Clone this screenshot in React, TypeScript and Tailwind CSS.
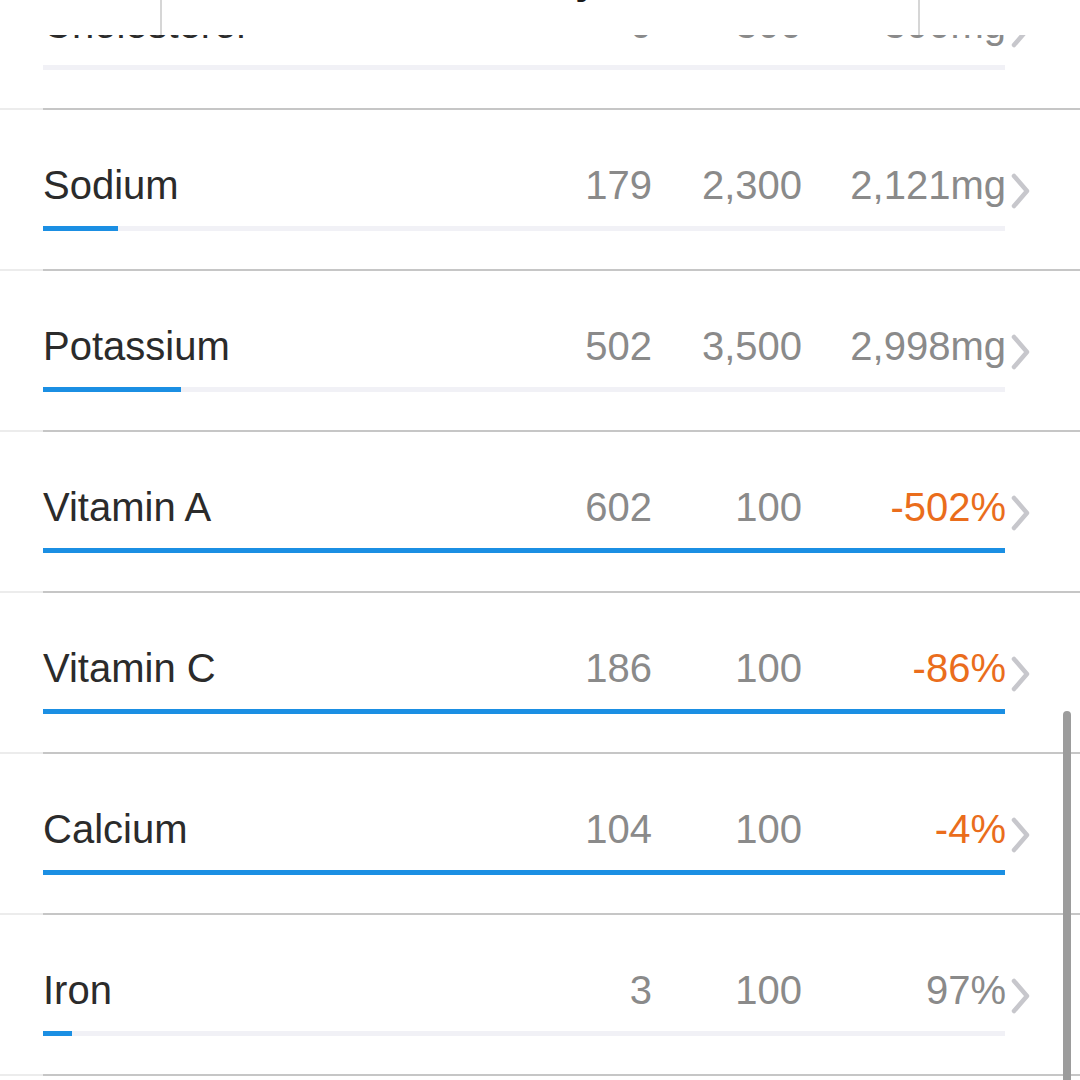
import React from 'react';

type Nutrient = {
    name: string;
    eaten: string;
    goal: string;
    left: string;
    over?: boolean;
    pct: number;
};

const nutrients: Nutrient[] = [
    { name: 'Cholesterol', eaten: '0', goal: '300', left: '300mg', pct: 0 },
    { name: 'Sodium', eaten: '179', goal: '2,300', left: '2,121mg', pct: 179 / 2300 },
    { name: 'Potassium', eaten: '502', goal: '3,500', left: '2,998mg', pct: 502 / 3500 },
    { name: 'Vitamin A', eaten: '602', goal: '100', left: '-502%', over: true, pct: 1 },
    { name: 'Vitamin C', eaten: '186', goal: '100', left: '-86%', over: true, pct: 1 },
    { name: 'Calcium', eaten: '104', goal: '100', left: '-4%', over: true, pct: 1 },
    { name: 'Iron', eaten: '3', goal: '100', left: '97%', pct: 0.03 },
];

const Chevron = () => (
    <svg width="26" height="36" viewBox="0 0 26 36" className="self-center translate-y-[6px] shrink-0">
        <path d="M8 3 L21 18 L8 33" fill="none" stroke="#c7c7cc" strokeWidth="4.5" strokeLinecap="round" strokeLinejoin="round" />
    </svg>
);

const NutrientRow = ({ item }: { item: Nutrient }) => (
    <div className="h-[161px] flex flex-col">
        <div className="flex items-baseline pl-[43px] pr-[48px] pt-[52px] text-[40px] leading-[46px]">
            <span className="flex-1 text-[#2b2b2b]">{item.name}</span>
            <span className="w-[150px] text-right text-[#8a8a8a]">{item.eaten}</span>
            <span className="w-[150px] text-right text-[#8a8a8a]">{item.goal}</span>
            <span className={`w-[204px] text-right ${item.over ? 'text-[#ea6d1c]' : 'text-[#8a8a8a]'}`}>{item.left}</span>
            <Chevron />
        </div>
        <div className="mt-[18px] ml-[43px] w-[962px] h-[5px] bg-[#f1f1f6]">
            <div className="h-full bg-[#1b8fe3]" style={{ width: `${Math.min(item.pct, 1) * 100}%` }} />
        </div>
        <div className="mt-auto h-[2px] bg-[#ececec]">
            <div className="ml-[43px] h-full bg-[#c6c6c6]" />
        </div>
    </div>
);

export default function App() {
    return (
        <div className="relative w-[1080px] h-[1080px] overflow-hidden bg-white" style={{ fontFamily: '"Liberation Sans", Arial, sans-serif' }}>
            <div className="-mt-[51px]">
                {nutrients.map((n) => (
                    <NutrientRow key={n.name} item={n} />
                ))}
            </div>

            {/* sticky header band covering the top of the list */}
            <div className="absolute inset-x-0 top-0 h-[35px] bg-white">
                <div className="absolute left-[160px] top-0 w-[760px] h-full border-l-2 border-r-2 border-[#d6d6d6]">
                    <div className="absolute inset-x-0 -top-[40px] text-center text-[40px] leading-[40px] font-bold text-[#1a1a1a]">Today</div>
                </div>
            </div>

            {/* scroll indicator */}
            <div className="absolute left-[1063px] top-[711px] w-[8px] h-[400px] rounded-full bg-[#9c9c9c]" />
        </div>
    );
}
